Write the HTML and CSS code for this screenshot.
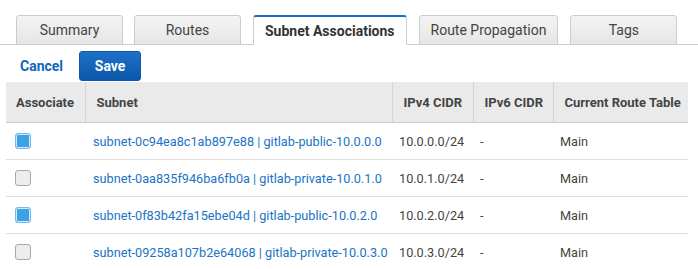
FILE: index.html
```html
<!DOCTYPE html>
<html lang="en">
<head>
  <meta charset="UTF-8">
  <title>Route Table - Subnet Associations</title>
  <link rel="stylesheet" href="styles.css">
</head>
<body>
  <div class="tabs">
    <div class="tab">Summary</div>
    <div class="tab">Routes</div>
    <div class="tab active">Subnet Associations</div>
    <div class="tab">Route Propagation</div>
    <div class="tab">Tags</div>
  </div>

  <div class="toolbar">
    <a class="cancel" href="#">Cancel</a>
    <button class="save">Save</button>
  </div>

  <table class="assoc">
    <colgroup>
      <col class="c-assoc">
      <col class="c-subnet">
      <col class="c-v4">
      <col class="c-v6">
      <col class="c-rt">
    </colgroup>
    <thead>
      <tr>
        <th>Associate</th>
        <th>Subnet</th>
        <th>IPv4 CIDR</th>
        <th>IPv6 CIDR</th>
        <th>Current Route Table</th>
      </tr>
    </thead>
    <tbody>
      <tr>
        <td><input type="checkbox" checked></td>
        <td><a href="#">subnet-0c94ea8c1ab897e88 | gitlab-public-10.0.0.0</a></td>
        <td>10.0.0.0/24</td>
        <td>-</td>
        <td>Main</td>
      </tr>
      <tr>
        <td><input type="checkbox"></td>
        <td><a href="#">subnet-0aa835f946ba6fb0a | gitlab-private-10.0.1.0</a></td>
        <td>10.0.1.0/24</td>
        <td>-</td>
        <td>Main</td>
      </tr>
      <tr>
        <td><input type="checkbox" checked></td>
        <td><a href="#">subnet-0f83b42fa15ebe04d | gitlab-public-10.0.2.0</a></td>
        <td>10.0.2.0/24</td>
        <td>-</td>
        <td>Main</td>
      </tr>
      <tr>
        <td><input type="checkbox"></td>
        <td><a href="#">subnet-09258a107b2e64068 | gitlab-private-10.0.3.0</a></td>
        <td>10.0.3.0/24</td>
        <td>-</td>
        <td>Main</td>
      </tr>
    </tbody>
  </table>
</body>
</html>
```

FILE: styles.css
```css
body { margin: 0; background: #fff; font-family: Roboto, "Liberation Sans", sans-serif; color: #444; overflow: hidden; }

/* tab strip */
.tabs { display: flex; gap: 12px; padding: 15px 0 0 16px; border-bottom: 1px solid #ccc; height: 29px; }
.tab { box-sizing: border-box; min-width: 107px; height: 30px; padding: 0 11px; display: flex; align-items: center; justify-content: center; font-size: 14px; color: #444; background: linear-gradient(#f4f4f4, #e6e6e6); border: 1px solid #ccc; border-radius: 3px 3px 0 0; }
.tab:first-child { margin-right: -1px; }
.tab.active { background: #fff; border-top: 2px solid #1a6dc4; border-bottom-color: #fff; font-weight: bold; color: #333; }

/* actions */
.toolbar { display: flex; align-items: center; gap: 16px; padding: 6px 0 1px 20px; }
.cancel { color: #1166bb; font-weight: bold; font-size: 14px; text-decoration: none; }
.save { width: 62px; height: 30px; border: 1px solid #0b57a8; border-radius: 3px; background: linear-gradient(#1e71c9, #0b56a8); color: #fff; font: bold 14px Roboto, "Liberation Sans", sans-serif; padding: 0; }

/* table */
.assoc { margin-left: 6px; width: 682px; border-collapse: collapse; table-layout: fixed; font-size: 13px; }
.c-assoc { width: 79px; }
.c-subnet { width: 307px; }
.c-v4 { width: 81px; }
.c-v6 { width: 80px; }
.c-rt { width: 135px; }
.assoc th { height: 40px; background: #eaeaea; text-align: left; font-weight: bold; color: #444; padding: 0 0 0 11px; border-left: 1px solid #d4d4d4; border-bottom: 1px solid #c8c8c8; white-space: nowrap; }
.assoc th:first-child { border-left: none; padding-left: 10px; }
.assoc td { height: 36px; padding: 0 0 0 7px; border-bottom: 1px solid #ddd; color: #444; white-space: nowrap; font-size: 12.7px; }
.assoc td:first-child { padding-left: 9px; }
.assoc td:nth-child(2) { padding-left: 8px; }
.assoc td a { color: #1a73c5; text-decoration: none; }

input[type="checkbox"] { appearance: none; -webkit-appearance: none; display: block; margin: 0; width: 16px; height: 16px; box-sizing: border-box; border: 1px solid #a8a8a8; border-radius: 3px; background: #ededed; }
input[type="checkbox"]:checked { border-color: #72bbee; background: #3aa3e7; box-shadow: inset 0 0 0 1px #d3eafa; }
```
